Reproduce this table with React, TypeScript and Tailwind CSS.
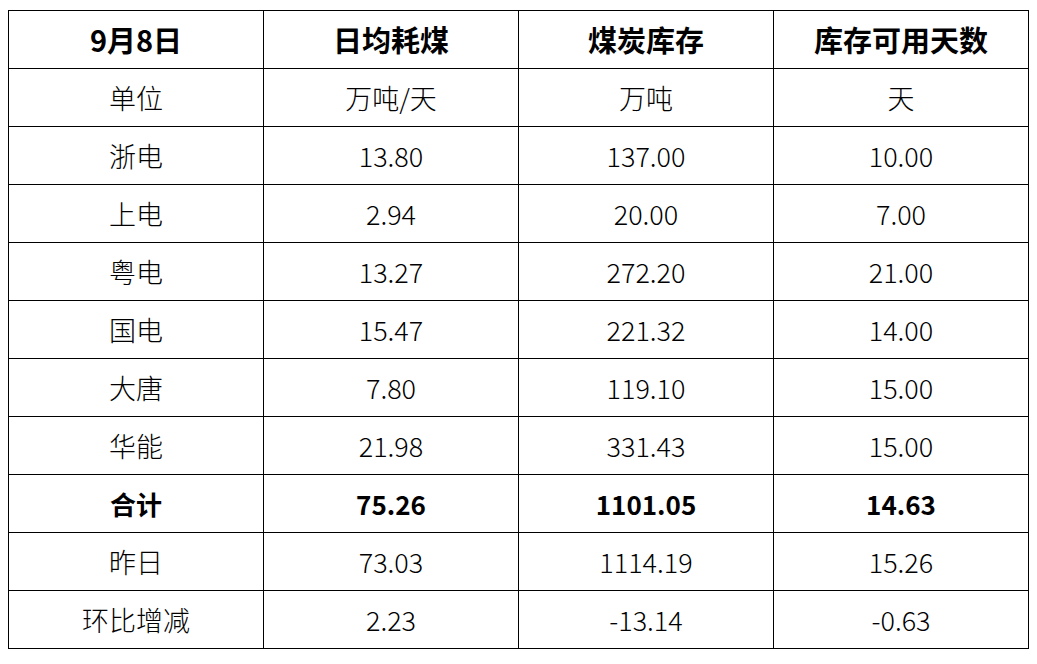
import React from 'react';

const header = ['9月8日', '日均耗煤', '煤炭库存', '库存可用天数'];

const rows: { cells: string[]; bold?: boolean }[] = [
  { cells: ['单位', '万吨/天', '万吨', '天'] },
  { cells: ['浙电', '13.80', '137.00', '10.00'] },
  { cells: ['上电', '2.94', '20.00', '7.00'] },
  { cells: ['粤电', '13.27', '272.20', '21.00'] },
  { cells: ['国电', '15.47', '221.32', '14.00'] },
  { cells: ['大唐', '7.80', '119.10', '15.00'] },
  { cells: ['华能', '21.98', '331.43', '15.00'] },
  { cells: ['合计', '75.26', '1101.05', '14.63'], bold: true },
  { cells: ['昨日', '73.03', '1114.19', '15.26'] },
  { cells: ['环比增减', '2.23', '-13.14', '-0.63'] },
];

const App: React.FC = () => {
  return (
    <div className="w-[1037px] h-[664px] bg-white pt-[10px] pl-[8px] font-['Noto_Sans_CJK_SC',sans-serif] text-black">
      <table className="table-fixed border-collapse w-[1020px]">
        <colgroup>
          <col className="w-[255px]" />
          <col className="w-[255px]" />
          <col className="w-[255px]" />
          <col className="w-[255px]" />
        </colgroup>
        <thead>
          <tr className="h-[58px]">
            {header.map((h) => (
              <th key={h} className="border border-black text-center text-[29px] font-bold leading-none p-0">
                {h}
              </th>
            ))}
          </tr>
        </thead>
        <tbody>
          {rows.map((row) => (
            <tr key={row.cells[0]} className="h-[58px]">
              {row.cells.map((c, i) => (
                <td
                  key={i}
                  className={`border border-black text-center leading-none p-0 ${
                    row.bold ? 'font-bold text-[26px]' : 'font-light text-[27px]'
                  }`}
                >
                  {c}
                </td>
              ))}
            </tr>
          ))}
        </tbody>
      </table>
    </div>
  );
};

export default App;
